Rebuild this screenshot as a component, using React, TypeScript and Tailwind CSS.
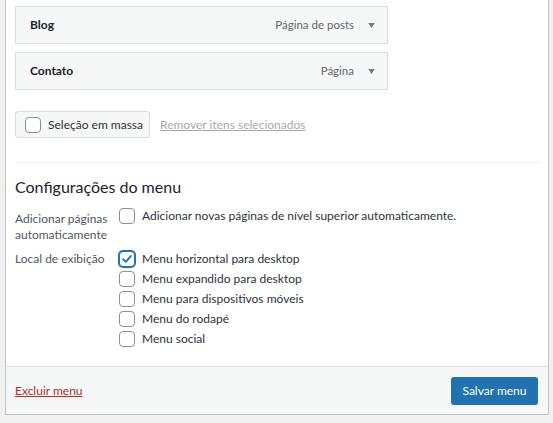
import React from "react";

const font = { fontFamily: 'Lato, "Liberation Sans", sans-serif' };

const Check = ({ checked = false }: { checked?: boolean }) => (
  <span
    className={
      "flex h-4 w-4 shrink-0 items-center justify-center rounded-[4px] border bg-white " +
      (checked ? "border-[#2271b1] shadow-[0_0_0_1px_#2271b1]" : "border-[#8c8f94]")
    }
  >
    {checked && (
      <svg viewBox="0 0 16 16" className="h-[14px] w-[14px]">
        <path d="M3.5 8.2 L6.6 11.2 L12.6 4.4" fill="none" stroke="#2271b1" strokeWidth="2.1" strokeLinecap="round" strokeLinejoin="round" />
      </svg>
    )}
  </span>
);

const MenuItem = ({ title, type }: { title: string; type: string }) => (
  <div className="flex h-[38px] w-[373px] items-center border border-[#dcdcde] bg-[#f6f7f7] pl-[14px] pr-[12px]">
    <span className="text-[12px] font-bold text-[#1d2327]">{title}</span>
    <span className="ml-auto text-[11.5px] text-[#646970]">{type}</span>
    <svg viewBox="0 0 8 6" className="ml-[14px] h-[5px] w-[7px]">
      <path d="M0 0 H8 L4 6 Z" fill="#787c82" />
    </svg>
  </div>
);

const locations = [
  { label: "Menu horizontal para desktop", checked: true },
  { label: "Menu expandido para desktop", checked: false },
  { label: "Menu para dispositivos móveis", checked: false },
  { label: "Menu do rodapé", checked: false },
  { label: "Menu social", checked: false },
];

export default function App() {
  return (
    <div className="h-[423px] w-[553px] overflow-hidden bg-[#f0f0f1] text-[12px] text-[#3c434a]" style={font}>
      <div className="ml-[5px] w-[544px] border-x border-b border-[#c3c4c7] bg-white">
        <div className="px-[9px] pt-[6px]">
          <div className="flex flex-col gap-[8px]">
            <MenuItem title="Blog" type="Página de posts" />
            <MenuItem title="Contato" type="Página" />
          </div>

          <div className="mt-[21px] flex items-center gap-[10px]">
            <div className="flex h-[27px] w-[135px] items-center gap-[7px] whitespace-nowrap rounded-[3px] border border-[#dcdcde] bg-[#f6f7f7] pl-[9px]">
              <Check />
              <span className="text-[12px] text-[#2c3338]">Seleção em massa</span>
            </div>
            <span className="whitespace-nowrap text-[12px] text-[#a7aaad] underline">Remover itens selecionados</span>
          </div>

          <div className="mt-[24px] w-[525px] border-t border-[#f0f0f1]" />

          <h3 className="mt-[12px] text-[16px] leading-[24px] font-normal text-[#1d2327]">Configurações do menu</h3>

          <div className="mt-[9px] flex items-start">
            <div className="w-[104px] pt-[3px] leading-[16px] text-[#50575e]">
              Adicionar páginas
              <br />
              automaticamente
            </div>
            <div className="flex items-center gap-[7px] whitespace-nowrap">
              <Check />
              <span className="leading-[16px] text-[#2c3338]">Adicionar novas páginas de nível superior automaticamente.</span>
            </div>
          </div>

          <div className="mt-[8px] flex">
            <div className="w-[104px] leading-[16px] text-[#50575e]">Local de exibição</div>
            <div className="flex flex-col gap-[4px]">
              {locations.map((l) => (
                <label key={l.label} className="flex items-center gap-[7px] whitespace-nowrap">
                  <Check checked={l.checked} />
                  <span className="leading-[16px] text-[#2c3338]">{l.label}</span>
                </label>
              ))}
            </div>
          </div>
        </div>

        <div className="mt-[19px] flex h-[48px] items-center border-t border-[#dcdcde] bg-[#f6f7f7] pl-[9px] pr-[10px]">
          <span className="text-[12px] text-[#b32d2e] underline">Excluir menu</span>
          <button className="ml-auto h-[28px] w-[87px] rounded-[3px] bg-[#2271b1] text-[12px] text-white">Salvar menu</button>
        </div>
      </div>
    </div>
  );
}
